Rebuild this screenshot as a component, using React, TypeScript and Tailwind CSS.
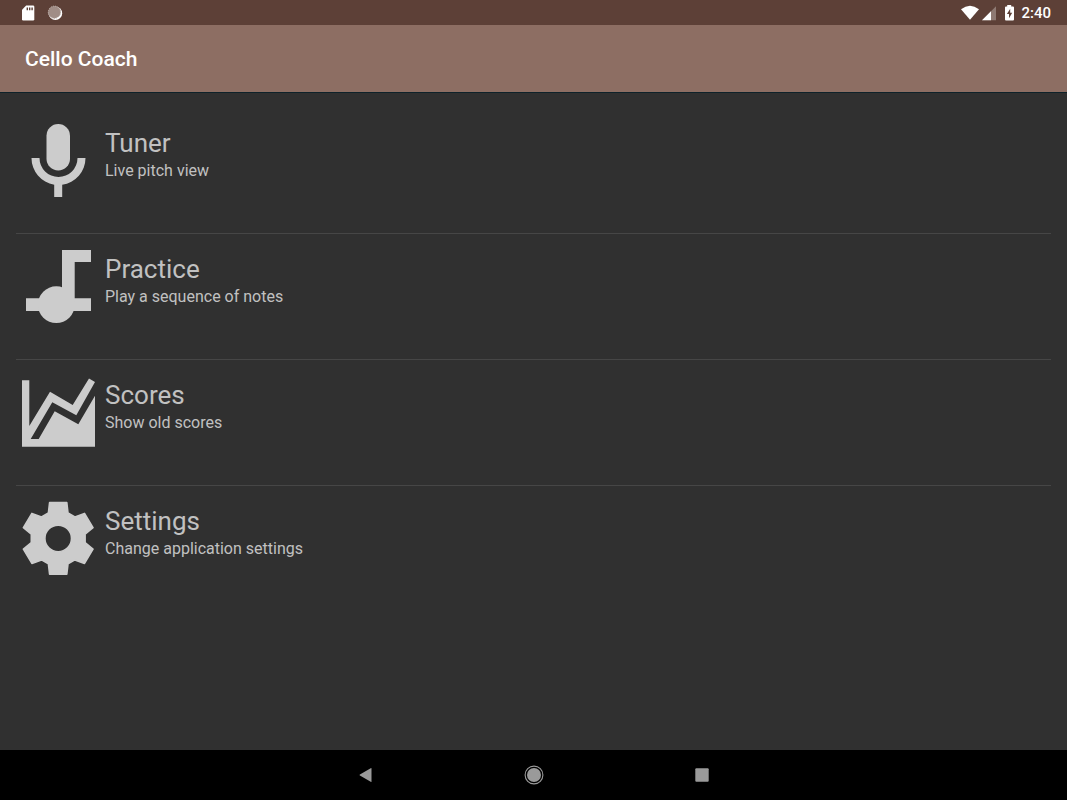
import type { ReactNode } from "react";

type MenuEntry = { title: string; detail: string; icon: ReactNode };

const entries: MenuEntry[] = [
  {
    title: "Tuner",
    detail: "Live pitch view",
    icon: (
      <>
        <rect x="30.5" y="6" width="23.5" height="46.5" rx="11.75" />
        <path d="M15.5 40H23.5A19 19 0 0 0 61.5 40H69.5A27 27 0 0 1 46.2 66.7V79H38.2V66.7A27 27 0 0 1 15.5 40Z" />
      </>
    ),
  },
  {
    title: "Practice",
    detail: "Play a sequence of notes",
    icon: (
      <>
        <path d="M46 6H75V18H58.7V54.3H75V67H10V54.3H46Z" />
        <circle cx="40.3" cy="60.7" r="18.4" />
      </>
    ),
  },
  {
    title: "Scores",
    detail: "Show old scores",
    icon: (
      <path d="M6 10.3H13.3V56L34 21.7L56.7 35L73 8.5L79 12L60.3 45.3L36.3 32.3L14.7 69H22.7L38.7 41.3L62.3 54.3L79 25.7V76.7H6Z" />
    ),
  },
  {
    title: "Settings",
    detail: "Change application settings",
    icon: (
      <path
        transform="translate(42.2 42.4)"
        fillRule="evenodd"
        stroke="currentColor"
        strokeWidth="1.6"
        strokeLinejoin="round"
        d="M-8.6 -35.8H8.6L9.8 -25.4L16.7 -21.5L26.3 -25L34.8 -10.8L26.9 -4.2V4.2L34.8 10.8L26.3 25L16.7 21.5L9.8 25.4L8.6 35.8H-8.6L-9.8 25.4L-16.7 21.5L-26.3 25L-34.8 10.8L-26.9 4.2V-4.2L-34.8 -10.8L-26.3 -25L-16.7 -21.5L-9.8 -25.4ZM13.3 0A13.3 13.3 0 1 0 -13.3 0A13.3 13.3 0 1 0 13.3 0Z"
      />
    ),
  },
];

function StatusBar() {
  return (
    <div className="flex h-[25px] shrink-0 items-center justify-between bg-[#5d4037] pr-4 pl-5 text-white">
      <div className="flex items-center gap-[11px]">
        <svg width="16" height="16" viewBox="0 0 16 16" aria-hidden="true">
          <path fill="#fff" d="M6.2 0.5H13Q14.3 0.5 14.3 1.8V14.2Q14.3 15.5 13 15.5H3.2Q2 15.5 2 14.2V4.7Z" />
          <path fill="#5d4037" d="M6.6 2.4H8V5.2H6.6ZM9 2.4H10.4V5.2H9ZM11.4 2.4H12.8V5.2H11.4Z" />
        </svg>
        <svg width="16" height="16" viewBox="0 0 16 16" aria-hidden="true">
          <circle cx="8.4" cy="8.3" r="6.8" fill="#fff" />
          <circle cx="7.4" cy="7.2" r="6.2" fill="#a08d86" />
          <circle cx="7.4" cy="7.2" r="6.1" fill="none" stroke="#b8aaa4" strokeWidth="1" strokeDasharray="1.2 1" />
        </svg>
      </div>
      <div className="flex items-center">
        <svg width="54" height="18" viewBox="0 0 54 18" aria-hidden="true">
          <path fill="#fff" d="M0 5.2Q9 -1.8 18 5.2L9 15.7Z" />
          <path fill="#8e7972" d="M35 2.2V16.2H21Z" />
          <path fill="#fff" d="M30 7.2V16.2H21Z" />
          <path fill="#fff" d="M46.2 1H50.2V2.5H52Q53 2.5 53 3.5V15.4Q53 16.4 52 16.4H45Q44 16.4 44 15.4V3.5Q44 2.5 45 2.5H46.2Z" />
          <path fill="#5d4037" d="M49.2 4.7L45.9 10H48V14.2L51.2 8.7H49.2Z" />
        </svg>
        <span className="ml-[6px] text-[15px] leading-5 font-medium">2:40</span>
      </div>
    </div>
  );
}

function NavigationBar() {
  const button = "flex h-full w-[168px] items-center justify-center";
  return (
    <nav className="flex h-[50px] shrink-0 justify-center bg-black text-[#9a9a9a]">
      <button type="button" aria-label="Back" className={button}>
        <svg width="20" height="20" viewBox="0 0 20 20" fill="currentColor" aria-hidden="true">
          <path d="M15.5 3.6V16.4Q15.5 17.3 14.7 16.8L3.9 10.6Q3.1 10 3.9 9.4L14.7 3.2Q15.5 2.7 15.5 3.6Z" />
        </svg>
      </button>
      <button type="button" aria-label="Home" className={button}>
        <svg width="20" height="20" viewBox="0 0 20 20" aria-hidden="true">
          <circle cx="10" cy="10" r="8.9" fill="none" stroke="currentColor" strokeWidth="1.1" />
          <circle cx="10" cy="10" r="7" fill="currentColor" />
        </svg>
      </button>
      <button type="button" aria-label="Recent apps" className={button}>
        <svg width="20" height="20" viewBox="0 0 20 20" fill="currentColor" aria-hidden="true">
          <rect x="3.3" y="3.3" width="13.4" height="13.4" rx="1" />
        </svg>
      </button>
    </nav>
  );
}

export default function App() {
  return (
    <div className="flex min-h-screen flex-col bg-[#303030] font-['Roboto',sans-serif]">
      <StatusBar />
      <header className="flex h-[68px] shrink-0 items-center border-b border-[#0e222a] bg-[#8d6e63] px-[25px]">
        <h1 className="text-[21px] leading-7 font-medium text-white">Cello Coach</h1>
      </header>
      <main className="flex-1 px-4 pt-[15px]">
        <ul className="divide-y divide-[#464646]">
          {entries.map((entry) => (
            <li key={entry.title}>
              <button type="button" className="flex h-[125px] w-full items-start gap-[5px] pt-[10px] text-left">
                <svg width="84" height="84" viewBox="0 0 84 84" fill="currentColor" className="shrink-0 text-[#cccccc]" aria-hidden="true">
                  {entry.icon}
                </svg>
                <span className="flex flex-col pt-[9px] text-[#c1c1c1]">
                  <span className="text-[26px] leading-8">{entry.title}</span>
                  <span className="text-base leading-6">{entry.detail}</span>
                </span>
              </button>
            </li>
          ))}
        </ul>
      </main>
      <NavigationBar />
    </div>
  );
}
